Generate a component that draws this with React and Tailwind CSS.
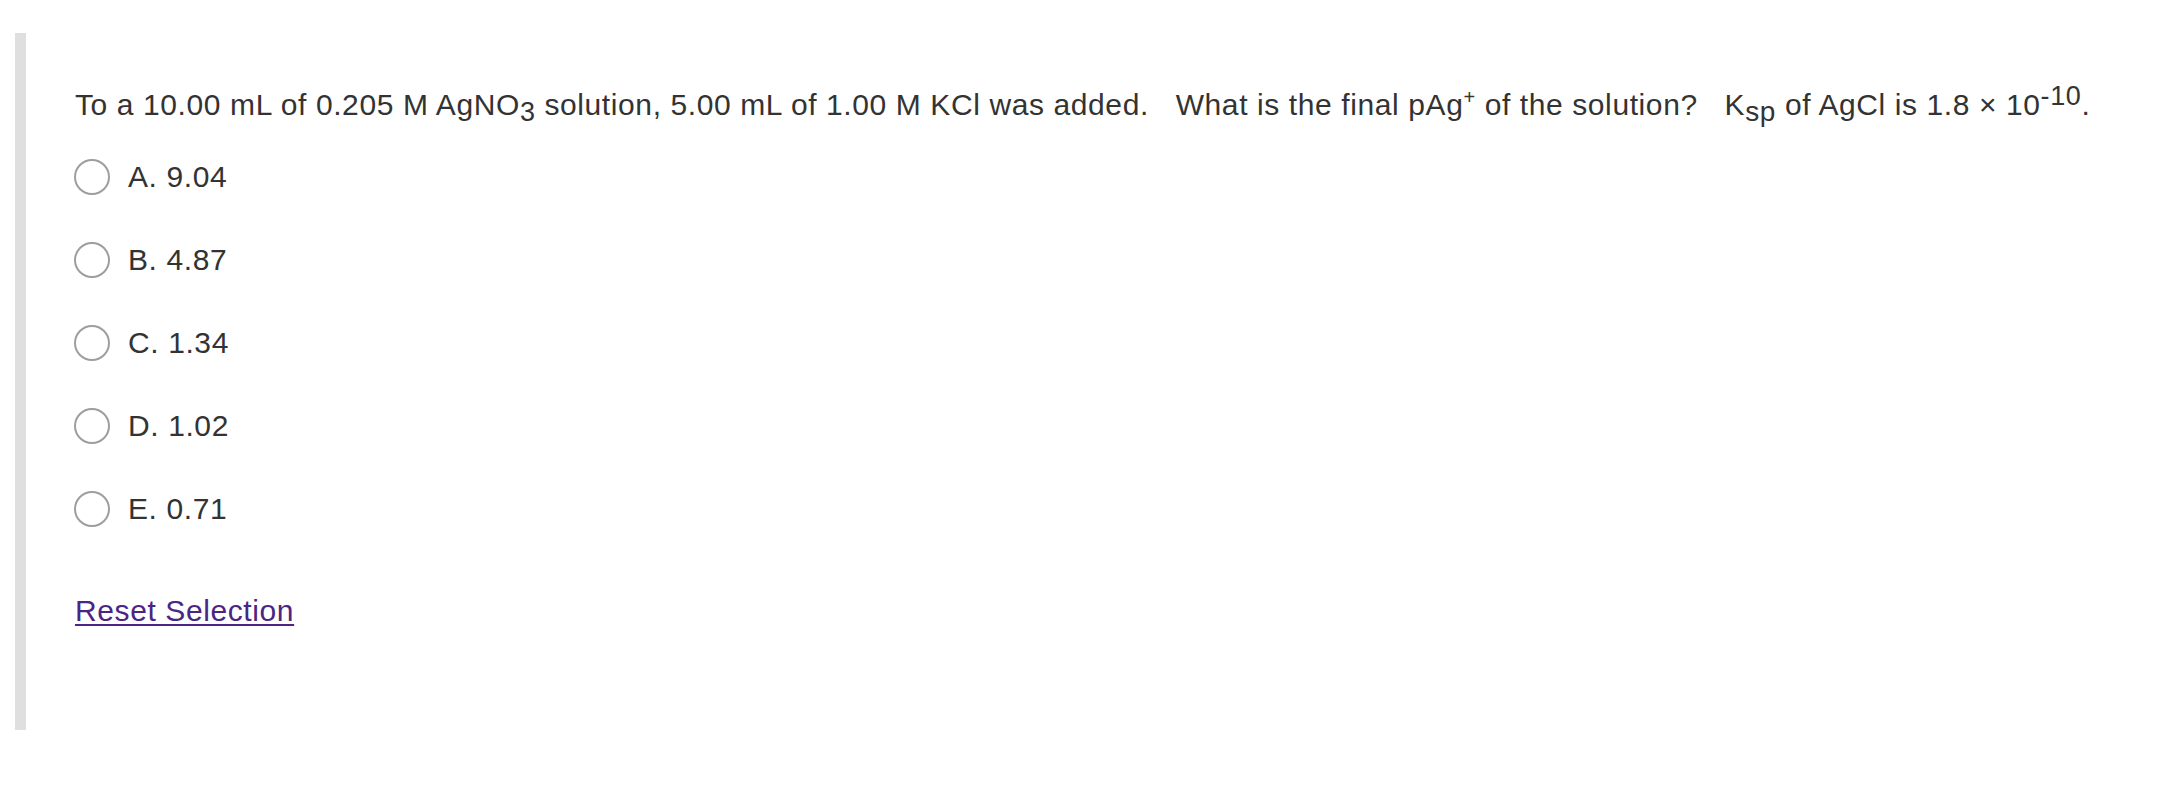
import React, { useState } from 'react';

const options = [
  { id: 'A', label: 'A. 9.04' },
  { id: 'B', label: 'B. 4.87' },
  { id: 'C', label: 'C. 1.34' },
  { id: 'D', label: 'D. 1.02' },
  { id: 'E', label: 'E. 0.71' },
];

export default function App() {
  const [selected, setSelected] = useState(null);

  return (
    <div className="min-h-screen bg-white pt-[33px] pl-[15px] text-[#333333] font-['Liberation_Sans',Arial,sans-serif] tracking-[0.6px]">
      <div className="h-[697px] border-l-[11px] border-[#dfdfdf] pl-[49px] pt-[54px]">
        {/* Question */}
        <p className="text-[30px] leading-[36px] whitespace-pre">
          To a 10.00 mL of 0.205 M AgNO<span className="text-[27px] leading-[0] align-[-6px]">3</span> solution, 5.00 mL of 1.00 M KCl was added.{'   '}What is the final pAg<span className="text-[20px] leading-[0] align-[11px]">+</span> of the solution?{'   '}K<span className="text-[28px] leading-[0] align-[-6px]">sp</span> of AgCl is 1.8 × 10<span className="text-[27px] leading-[0] align-[10px]">-10</span>.
        </p>

        {/* Answer choices */}
        <div className="mt-[12px] flex flex-col">
          {options.map((opt) => (
            <label key={opt.id} className="flex h-[83px] items-center cursor-pointer" onClick={() => setSelected(opt.id)}>
              <span className="ml-[-1px] mr-[18px] flex h-[36px] w-[36px] items-center justify-center rounded-full border-2 border-[#9e9e9e] bg-white">
                {selected === opt.id && <span className="h-[18px] w-[18px] rounded-full bg-[#333333]" />}
              </span>
              <span className="text-[30px] leading-[36px]">{opt.label}</span>
            </label>
          ))}
        </div>

        {/* Reset */}
        <div className="mt-[43px]">
          <a href="#" onClick={(e) => { e.preventDefault(); setSelected(null); }} className="text-[30px] leading-[36px] text-[#4b2585] underline decoration-2 underline-offset-[3px]">
            Reset Selection
          </a>
        </div>
      </div>
    </div>
  );
}
